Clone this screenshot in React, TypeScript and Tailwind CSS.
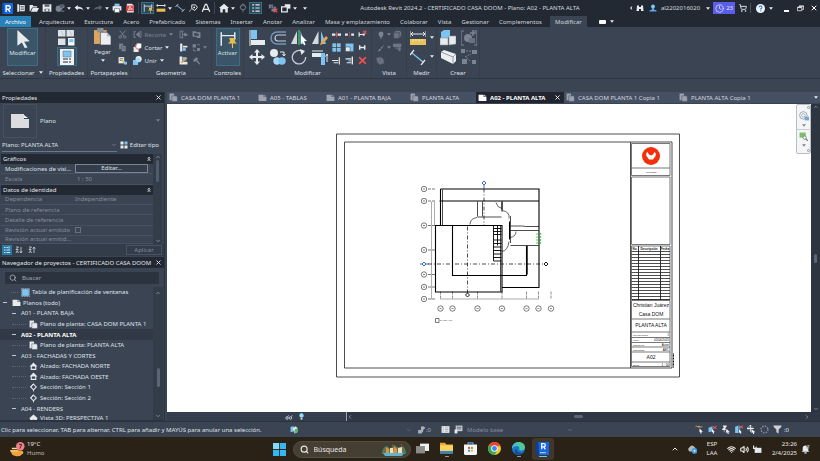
import React from 'react';
import { ChevronDown, ChevronRight, ChevronLeft, ChevronUp, X, Search, Clock, ShoppingCart, Wifi, Volume2 } from 'lucide-react';

const G = '#7c8491';
const W = '#e8ebee';
const B = '#7cc4f2';

// every glyph is drawn on a 16x16 board
const glyphs: Record<string, React.ReactNode> = {
  revit: <><path d="M0 0h16v16H0z" fill="#1667e0" /><path d="M0 0h3v16H0z" fill="#0d4bb0" /><path d="M6 13V4h3.5a2.3 2.3 0 0 1 0 5H6M9 9l2.5 4" fill="none" stroke="#fff" strokeWidth="2" /></>,
  panel: <><path d="M2 2h3v12H2zM6 3h8v10H6z" fill={W} /><path d="M7.500 5.500h5M7.500 8h5M7.500 10.500h5" stroke="#222933" /></>,
  open: <path d="M1 13V3h5l1 2h6v2H5l-3 6zM6 8h10l-3 6H3z" fill={W} />,
  save: <><path d="M1 2h14v12H1z" fill={W} /><path d="M4 2h8v4H4zM4 9h8v5H4z" fill="#59616e" /><path d="M6 10h4v3H6z" fill={W} /></>,
  sync: <><circle cx="6" cy="9" r="5" fill={G} /><path d="M8 2h7v6H8z" fill="#565f6d" /><path d="M10 10l5-4M10 13h5" stroke={G} strokeWidth="1.500" /></>,
  undo: <path d="M1 7l5-4v3c6 0 8 2 9 6-2-3-4-3-9-3v3z" fill={W} />,
  redo: <path d="M15 7l-5-4v3c-6 0-8 2-9 6 2-3 4-3 9-3v3z" fill="#59616e" />,
  print: <><path d="M4 1h8v4H4z" fill={B} /><path d="M1 5h14v7H1z" fill={W} /><path d="M4 9h8v6H4z" fill="#fff" stroke="#59616e" /></>,
  pdf: <><path d="M3 1h8l3 3v11H3z" fill={W} /><path d="M2 4h12v9H2z" fill="#e2484d" /><path d="M5 11c2-2 3-5 3-6 0 3 2 4 4 5-3-1-5 0-7 1" fill="none" stroke="#fff" /></>,
  dim: <><path d="M2 2v12M14 2v6M2 5h12" stroke={W} strokeWidth="1.300" fill="none" /><path d="M9 7h6l-1 3 2 2H8l2-2zM11.500 12h1v4h-1z" fill="#e9bd4c" /></>,
  ruler: <><path d="M1 9h14v5H1z" fill="#e9bd4c" /><path d="M1 4h14M2 2v4M14 2v4" stroke={W} strokeWidth="1.500" /></>,
  aligned: <><path d="M3 4l10 8" stroke={B} strokeWidth="1.500" /><path d="M1 6l4-4M11 14l4-4" stroke={W} strokeWidth="1.500" /></>,
  tag: <><path d="M2 14l4-5" stroke={W} /><path d="M6 3h6l3 4-4 5-5-3z" fill="none" stroke={W} strokeWidth="1.500" /><circle cx="10" cy="7" r="1.500" fill={W} /></>,
  letterA: <path d="M2 14L7 2h2l5 12M4.500 10h7" stroke={W} strokeWidth="2" fill="none" />,
  home: <path d="M8 1l8 7h-2v7h-4v-5H6v5H2V8H0z" fill={W} />,
  section: <><circle cx="8" cy="7" r="4" fill="none" stroke={G} strokeWidth="1.500" /><path d="M3 7l5-6 5 6M8 11v4" fill="none" stroke={G} strokeWidth="1.200" /></>,
  thin: <path d="M2 3h3M7 3h7M2 8h3M7 8h7M2 13h3M7 13h7" stroke={W} strokeWidth="1.800" />,
  closeWin: <><path d="M1 2h8v7H1zM5 5h8v9H5z" fill={G} stroke="#222933" /><path d="M9 9l6 6M15 9l-6 6" stroke="#ef5350" strokeWidth="2" /></>,
  switchWin: <><path d="M6 2h9v7H6z" fill={W} /><path d="M1 6h9v8H1z" fill="#222933" stroke={W} strokeWidth="2" /></>,
  bino: <path d="M2 3h4v3h4V3h4l1 11h-5v-4H6v4H1z" fill={W} />,
  user: <><circle cx="8" cy="5" r="4" fill={B} /><path d="M6 8h4v3l5 2v2H1v-2l5-2z" fill="#5ca7ea" /></>,
  help: <><circle cx="8" cy="8" r="8" fill="#f1f4f8" /><path d="M5.500 6a2.500 2.500 0 1 1 3 2.400V10M8.500 11.500v2" fill="none" stroke="#2f7dd1" strokeWidth="2" /></>,
  restore: <path d="M5 5V2h10v8h-4M1 5h10v8H1zM1 6h10M5 3h10" fill="none" stroke="#fff" strokeWidth="1.600" />,
  cursor: <path d="M3 0l11 10-5 .5 3 5-2.500.5-2.500-5L3 14z" fill={W} />,
  typeProps: <><path d="M0 1h7v6H0zM8 1h7v6H8zM0 9h7v6H0z" fill="#dfe2e6" /><path d="M3 2l2 4M11 2l2 4" stroke="#c3c8ce" /><path d="M9 8h7v8H9z" fill="#fff" stroke="#3b4453" /><path d="M10.500 9.500h4v3h-4z" fill={B} /></>,
  props: <><path d="M1 0h14v16H1z" fill="#f0f2f4" /><path d="M4 2h8v6H4z" fill={B} stroke="#5b7891" strokeWidth=".6" /><path d="M4 10h5M4 13h5M10 10h2M10 13h2" stroke="#636d7a" strokeWidth="1.500" /></>,
  paste: <><path d="M0 2h12v13H0z" fill="#d9a762" /><path d="M3 0h6v4H3z" fill="#8b8f96" /><path d="M6 4h6l4 4v8H6z" fill="#eceef0" stroke="#3b4453" strokeWidth=".6" /><path d="M12 4v4h4" fill="#b9bec5" /></>,
  cut: <><path d="M3 1l8 10M13 1L5 11" stroke={G} strokeWidth="1.500" /><circle cx="4" cy="12.500" r="2.200" fill="none" stroke={G} strokeWidth="1.500" /><circle cx="12" cy="12.500" r="2.200" fill="none" stroke={G} strokeWidth="1.500" /></>,
  copyPage: <><path d="M2 1h7v10H2z" fill={G} /><path d="M6 5h8v10H6z" fill="#8d949f" stroke="#3b4453" /><path d="M8 8h4M8 10h4M8 12h4" stroke="#3b4453" /></>,
  match: <><path d="M1 2h10v11H1z" fill={W} /><path d="M3 5h6M3 8h6" stroke="#59616e" strokeWidth="1.500" /><path d="M6 7l6 5" stroke="#e9bd4c" strokeWidth="3" /><path d="M10 10h6v5h-5z" fill={B} /></>,
  cope: <path d="M2 2v12M2 3h3M2 13h3M6 8l5-4v8zM14 2v12M12 3h2M12 13h2" fill={G} stroke={G} strokeWidth="1.500" />,
  cutGeo: <><path d="M1 7h9v9H1z" fill={W} /><path d="M7 0l8 1v8l-6 2-4-5z" fill="#fff" stroke="#3b4453" strokeWidth=".5" /><path d="M9 1a5 5 0 1 0 4 8" fill="none" stroke="#ed6a62" strokeWidth="1.500" /></>,
  joinGeo: <><circle cx="10" cy="5.500" r="5.500" fill={W} /><path d="M0 7h9v9H0z" fill={B} /><circle cx="9" cy="7" r="4" fill="#a9d8f7" /></>,
  wallJoin: <><path d="M2 2h4v12H2zM6 2h2M6 14h2" stroke={G} fill="none" strokeWidth="1.500" /><path d="M7 8l5-4v3h3v3h-3v2z" fill={G} /></>,
  paint: <path d="M1 2h6l1 2h7v10H9l-1-2H1z M4 5v5h8V7z" fill={G} fillRule="evenodd" />,
  beam: <><path d="M2 1h4v14H2z" fill={W} /><path d="M7 5h8v3H7z" fill={W} /><path d="M7 9h5v5H7z" fill={B} /></>,
  split: <><path d="M1 2h6v6H1zM9 9h5v5H9z" fill={G} /><path d="M9 3h5M3 10v4h4" stroke={G} strokeWidth="1.500" fill="none" /></>,
  faces: <><path d="M1 1h5v14H1zM6 10h9v5H6z" fill={W} /><path d="M7 2h6v6H7z" fill={B} /><path d="M4 12L14 3" stroke="#e9a13c" strokeWidth="2.500" /></>,
  hammer: <path d="M2 7l6-5 3 3-2 2 6 7-2 1-6-6-3 2z" fill={G} />,
  alignTool: <><path d="M1 0v16" stroke={W} strokeWidth="1" /><path d="M2 0h6v9H2z" fill={B} /><path d="M2 10h14v5H2z" fill={W} /></>,
  offset: <><path d="M16 2H7a6 6 0 0 0 0 12h9" fill="none" stroke="#7195b7" strokeWidth="1.500" /><path d="M16 5H8a3 3 0 0 0 0 6h8" fill="none" stroke="#c5ccd5" strokeWidth="1.200" /></>,
  mirrorAxis: <><path d="M6 1v13H0z" fill="#d5d9de" /><path d="M8 0v15" stroke="#49b06a" strokeWidth="1.500" /><path d="M9.500 1v13H14z" fill={B} /><path d="M10 5l6 6-3 .3 1.500 3.500-1.500.5-1.500-3.500L10 14z" fill="#fff" /></>,
  mirrorDraw: <><path d="M6.500 1v13H0z" fill="#d5d9de" /><path d="M9 1v13h5z" fill={B} /><path d="M8 15l1-3 5-6 2 2-5 6z" fill="#e9a552" /></>,
  move: <path d="M8 0l3 3.500H9V7h3.500V5L16 8l-3.500 3V9H9v3.500h2L8 16l-3-3.500h2V9H3.500v2L0 8l3.500-3v2H7V3.500H5z" fill={W} />,
  copy: <><circle cx="4" cy="4" r="4" fill={W} /><circle cx="7" cy="12" r="3.700" fill="#a9d8f7" /><circle cx="12" cy="12" r="3.700" fill={B} /><path d="M10 3h4v3M12.500 5l1.500 2 1.500-2" fill="none" stroke={W} /></>,
  rotate: <><path d="M11 2.200A6.700 6.700 0 1 0 14.700 8" fill="none" stroke="#c5ccd5" strokeWidth="1.300" /><path d="M9 0l5 2-3.500 4z" fill={W} /></>,
  trim: <><path d="M0 4h9v4H0z" fill={W} /><path d="M9 4h4v12H9z" fill={B} /><path d="M0 2h11M15 13V6M13.500 7.500L15 5l1.500 2.500" stroke={W} fill="none" /></>,
  splitEl: <><path d="M0 6h6v4H0zM10 6h6v4h-6z" fill={W} /><path d="M8 3v10" stroke="#ef5350" strokeWidth="1.500" /></>,
  splitGap: <><path d="M0 6h5v4H0zM11 6h5v4h-5z" fill={W} /><path d="M8 3v10" stroke="#ef5350" strokeWidth="1.200" strokeDasharray="2 1" /></>,
  unpin: <><path d="M2 4v8M2 8h6" stroke={W} strokeWidth="2" fill="none" /><path d="M8 6h4v4H8z" fill={W} /><path d="M9 1l6 6M15 1L9 7" stroke="#ef5350" strokeWidth="2" /></>,
  array: <path d="M1 1h6v6H1zM9 1h6v6H9zM1 9h6v6H1zM9 9h6v6H9z" fill={B} stroke="#a9d8f7" strokeWidth=".5" />,
  scale: <><path d="M1 1h14v14H1z" fill={B} /><path d="M1 7h8v8H1z" fill={W} stroke="#3b4453" /></>,
  pin: <path d="M3 4v8M3 8h8M12 4v8" stroke={W} strokeWidth="2.500" />,
  trimOne: <path d="M0 8h11M3 12h8M13 2v13" stroke={W} strokeWidth="2" />,
  trimMany: <><path d="M13 1v14" stroke={W} strokeWidth="2.500" /><path d="M1 5h10M3 12h8" stroke={W} strokeWidth="2" /><path d="M6 8.500h5" stroke={B} strokeWidth="2" /></>,
  del: <path d="M2 2l12 12M14 2L2 14" stroke="#f0524f" strokeWidth="3" />,
  bulb: <path d="M8 1a5 5 0 0 1 3 9v2H5v-2a5 5 0 0 1 3-9M6 13h4v2H6z" fill={G} />,
  cube: <path d="M5 1h10v9l-4 5H1V5zM1 5h10v10M11 5l4-4" fill="#6b7380" stroke="#3b4453" />,
  brush: <path d="M15 1L7 8l2 2zM6 9l2 2c-2 4-5 4-7 3 3 0 2-4 5-5" fill={G} />,
  override: <path d="M1 2h13v4H1zM4 9h10M8 12h6M12 8v7" fill="#6b7380" stroke={G} strokeWidth="1.500" />,
  shape: <path d="M1 3l8-1 5 5v6l-7 2-5-4z M5 6l4 3" fill="#6b7380" stroke="#59616e" />,
  measure: <><path d="M0 1v6M16 1v6M1 4h14M3 2L1 4l2 2M13 2l2 2-2 2" fill="none" stroke={W} strokeWidth="1" /><path d="M0 9h16v6H0z" fill="#e8c458" /><path d="M3 9v3M6 9v2M9 9v3M12 9v2" stroke="#fff" strokeWidth=".6" /></>,
  measureDiag: <><path d="M2 4l11 9" stroke={B} strokeWidth="1.300" /><path d="M0 6l4-5M11 16l4-5" stroke={W} strokeWidth="1.300" /></>,
  group: <><path d="M1 2l3-2h6v6L8 8H1z" fill={B} /><path d="M0 8h8v7H0zM9 6h7v8l-7 1z" fill={W} stroke="#8d949f" strokeWidth=".6" /></>,
  assembly: <><path d="M1 3l3-2 12 4v7l-3 3L1 9z" fill="#eceef0" /><path d="M1 3l12 5v7M13 8l3-3" fill="none" stroke="#7c8491" strokeWidth=".8" /></>,
  parts: <><path d="M3 1H0v14h3M13 1h3v14h-3" fill="none" stroke={G} strokeWidth="1.200" /><circle cx="7" cy="8" r="4" fill={G} /><path d="M8 8h6v5H8z" fill="#69717e" /><path d="M12 0v6M9 3h6" stroke={G} strokeWidth="1.500" /></>,
  similar: <><path d="M0 0h4v4H0zM11 1h5v4h-5zM1 10h5v5H1zM11 11h4v4h-4z" fill={G} /><path d="M5 2h5M4 8l6-3M9 12L5 8" stroke={G} strokeDasharray="2 1" /></>,
  page: <><path d="M1 3h9v4h5v7H1z" fill="currentColor" /><path d="M11 3l4 3h-4z" fill="currentColor" /></>,
  planView: <><path d="M1 1h8v12H1z" fill="currentColor" /><path d="M5 5h8l2 2v8H5z" fill="currentColor" stroke="#3b4453" strokeWidth=".8" /></>,
  blueTable: <><path d="M1 1h14v14H1z" fill="none" stroke={W} strokeDasharray="2 1" /><path d="M2 2h12v12H2z" fill={B} /></>,
  elevation: <path d="M8 1l7 7h-2v6H3V8H1zM5 8h6v4H5z" fill={W} fillRule="evenodd" />,
  sectionView: <><path d="M3 7l5-5 5 5-5 5z" fill="none" stroke={W} strokeWidth="1.800" /><path d="M8 12v3M3 7l5-6" stroke={W} strokeWidth="1.500" /></>,
  editType: <><path d="M1 1h6v6H1zM1 9h6v6H1zM9 9h6v6H9z" fill={W} /><path d="M9 1h6v6H9z" fill={B} /></>,
  sortCat: <path d="M2 3h3M2 8h3M2 13h3M7 3h3M7 8h7M7 13h7M12 1v4" stroke={W} strokeWidth="1.800" />,
  sortAsc: <path d="M2 2h5L2 7h5M2 14l2.500-5L7 14M12 2v11M9.500 10.500L12 14l2.500-3.500" stroke={W} strokeWidth="1.400" fill="none" />,
  sortDesc: <path d="M2 2h5L2 7h5M2 14l2.500-5L7 14M12 14V3M9.500 5.500L12 2l2.500 3.500" stroke={W} strokeWidth="1.400" fill="none" />,
  glasses: <><circle cx="4" cy="10" r="2.500" fill="none" stroke={W} strokeWidth="1.500" /><circle cx="11" cy="10" r="2.500" fill="none" stroke={W} strokeWidth="1.500" /><path d="M5 8l3-4M12 8l3-4" stroke={W} /></>,
  bulbOn: <><circle cx="8" cy="5.500" r="5" fill="#8fe0ff" /><path d="M6 11h4v4H6z" fill={W} /></>,
  worksets: <><path d="M1 3l6-1v9l-6 2z" fill={B} /><path d="M5 6l5-4 3 3v8l-5 2z" fill={W} /><path d="M8 8l6-3v7l-6 3z" fill="#59b56b" /></>,
  editable: <path d="M2 15V9h5V3l4-1 4 3-4 4v2l-3 4z" fill="#aab0b9" />,
  options: <><path d="M1 2h14v12H1z" fill={W} /><path d="M3 5h2M7 5h6M3 8h2M7 8h6M3 11h2M7 11h6" stroke="#8b929d" strokeWidth="1.200" /></>,
  optionSet: <><path d="M3 1h12v10H3z" fill="#c7ccd3" /><path d="M5 4h8M5 7h8" stroke="#59616e" strokeWidth="1.500" /><path d="M1 8h5v7H1z" fill={W} /></>,
  selLink: <><path d="M1 3c3-3 5 3 8 0M5 3c3-3 5 3 8 0" stroke="#e7a56a" strokeWidth="1.600" fill="none" /><path d="M8 6l6 6h-3l1 3h-2l-1-3-1 1z" fill="#fff" /></>,
  selUnder: <><path d="M1 5l7-3v9l-7 2z" fill={B} /><path d="M9 2l6 5M15 2L9 7" stroke="#ef5350" strokeWidth="1.800" /><path d="M7 7l5 5h-2l1 3H9l-1-3-1 1z" fill="#fff" /></>,
  selPin: <path d="M3 1h7v2L8 5v3h3L16 13h-3l1 3h-2l-1-3-2 1V9H6v4H5V9H2V7l3-2z" fill={W} />,
  selFace: <><path d="M2 3l6-2v13H2z" fill={B} /><path d="M8 1l3 2v10H8z" fill="#4a93c9" /><path d="M10 1l6 5M16 1l-6 5" stroke="#ef5350" strokeWidth="1.800" /><path d="M9 8l5 5h-2l1 2h-2l-1-2-1 1z" fill="#fff" /></>,
  selDrag: <><path d="M6 0v12M0 6h12" stroke={W} strokeWidth="1.800" /><path d="M3 3l3-3 3 3M3 9l-3-3 3-3" stroke={W} fill="none" /><path d="M8 7l7 6h-3l1 3h-2l-1-3-2 1z" fill="#fff" /></>,
  spinner: <circle cx="8" cy="8" r="6" fill="none" stroke="#8d949f" strokeWidth="2.500" strokeDasharray="2.500 2.200" />,
  filter: <path d="M1 1h14v2l-5 5v7l-4-2V8L1 3z" fill="#cdd2d8" />,
  start: <><path d="M0 0h7.500v7.500H0zM8.500 0H16v7.500H8.500zM0 8.500h7.500V16H0zM8.500 8.500H16V16H8.500z" fill="#37b7f1" /><path d="M0 0h7.500v7.500H0z" fill="#7fdcfb" /></>,
  taskView: <><path d="M5 2h11v9H5z" fill="#f1f1f1" /><path d="M0 5h11v9H0z" fill="#8c8b88" /></>,
  explorer: <><path d="M0 1h6l2 2h8v11H0z" fill="#e8a92e" /><path d="M0 4h16v8H0z" fill="#fbd35c" /><path d="M0 11h16v3H0z" fill="#2f86d8" /></>,
  store: <><path d="M5 3V1h6v2" fill="none" stroke="#58a6e0" strokeWidth="1.500" /><path d="M0 3h16v11q0 2-2 2H2q-2 0-2-2z" fill="#f4f6f8" /><path d="M5 6h2.500v2.500H5z" fill="#e8513a" /><path d="M8.500 6H11v2.500H8.500z" fill="#71b340" /><path d="M5 9.500h2.500V12H5z" fill="#2f9ae0" /><path d="M8.500 9.500H11V12H8.500z" fill="#f2b52e" /></>,
  chrome: <><circle cx="8" cy="8" r="8" fill="#f7c52f" /><path d="M8 8L1.100 4A8 8 0 0 1 14.900 4z" fill="#e5443a" /><path d="M8 8L1.100 4A8 8 0 0 0 8 16l3.500-6z" fill="#34a853" /><circle cx="8" cy="8" r="4" fill="#fff" /><circle cx="8" cy="8" r="3" fill="#3f82f0" /></>,
  edge: <><circle cx="8" cy="8" r="8" fill="#1c78cc" /><path d="M0 8C0 3 4 0 8 0c5 0 8 3 8 6.500 0 3-2.500 4-4.500 4S8.500 9.500 9 8 8 5 6 5 1 6 0 8" fill="#4fc99a" /><path d="M0 8C0 4 4 1 9 3.500 5 3.500 2 5 0 8" fill="#45b8ea" /><path d="M6 8c-1 4 3 6.500 8 4.500-2 3-6 4-9 2S3 9 6 8" fill="#0f4f99" /></>,
  revitApp: <><path d="M0 0h16v16H0z" fill="#1667e0" /><path d="M0 0h3l1 16H0z" fill="#0b3f98" /><path d="M7 9V2h2.500a2 2 0 0 1 0 4H7M9.500 6l2 3" fill="none" stroke="#fff" strokeWidth="1.500" /><path d="M5 13h7" stroke="#cfe0fb" strokeWidth="1.500" strokeDasharray="2 .6" /></>,
  cloud: <><path d="M4 12a4 4 0 0 1 0-7 5 5 0 0 1 9 1 3.500 3.500 0 0 1 0 6z" fill="#b9b7b3" /><circle cx="12" cy="11" r="4.500" fill="#3b9be6" /><path d="M10 11h4M12 9v4" stroke="#fff" /></>,
  battery: <><path d="M3 5h12v9H3z" fill={W} /><path d="M1 1v5h4l1-3" stroke={W} strokeWidth="2" fill="none" /></>,
  bell: <><path d="M1 12l2-2V6a5 5 0 0 1 10 0v4l2 2zM6 13h4v2H6z" fill={W} /><path d="M10 0h6v6h-6z" fill="#2a2318" opacity=".6" /><path d="M11 1h4l-4 4h4" stroke={W} fill="none" /></>,
  wheel: <><circle cx="7" cy="7" r="6" fill="#f4f5f7" stroke="#8a93a0" strokeWidth="1.200" /><circle cx="7" cy="7" r="2.800" fill="none" stroke="#8a93a0" /><path d="M9 9h7v6H9z" fill="#77a6d6" /></>,
  zoomNav: <><path d="M1 1h11v9H1z" fill="#7dbd6c" /><circle cx="10" cy="10" r="3" fill="#f1f5f1" stroke="#6d7a70" strokeWidth="1.300" /><path d="M12 12l4 4" stroke="#6d7a70" strokeWidth="2" /></>,
};

const Icon = ({ name, size = 'size-[10px]' }: { name: string; size?: string }) => (
  <svg viewBox="0 0 16 16" className={`${size} shrink-0`} aria-hidden="true">{glyphs[name]}</svg>
);

const Caret = ({ dim = false }: { dim?: boolean }) => (
  <svg viewBox="0 0 6 4" className="w-[4px] h-[3px] shrink-0" aria-hidden="true">
    <path d="M0 0h6L3 4z" fill={dim ? '#7c8491' : '#e8ebee'} />
  </svg>
);

const Tool = ({ name, size, box = 'w-[13px] h-[13px]' }: { name: string; size?: string; box?: string }) => (
  <button aria-label={name} className={`${box} flex items-center justify-center shrink-0`}>
    <Icon name={name} size={size} />
  </button>
);

// v: drop-down arrow, |: divider, -: plain gap, *: switched on
const quick = ['panel', 'open', 'save', 'sync', 'v', 'undo', 'v', 'redo', 'v', 'print', 'pdf', '|', '*dim', 'ruler', 'v', 'aligned', 'tag', 'letterA', '|', 'home', 'v', 'section', '*thin', '-', 'closeWin', 'switchWin', 'v', '-', 'v'];

const TitleBar = () => (
  <header className="h-4 shrink-0 flex items-center justify-between bg-[#222933] text-[#d5d9df]">
    <div className="flex items-center h-3 mr-1">
      <div className="w-[14px] flex justify-center"><Icon name="revit" size="size-[11px]" /></div>
      {quick.map((q, i) => {
        if (q === 'v') return <button key={i} aria-label="Más" className="w-[6px] flex justify-center"><Caret /></button>;
        if (q === '|') return <span key={i} className="w-px h-3 mx-[2px] bg-[#3e4755]" />;
        if (q === '-') return <span key={i} className="w-[4px]" />;
        if (q[0] === '*') return <Tool key={i} name={q.slice(1)} box="w-[13px] h-3 bg-[#28485a] border border-[#3a7088]" />;
        return <Tool key={i} name={q} box="w-[13px] h-3" />;
      })}
    </div>
    <h1 className="font-normal whitespace-nowrap">Autodesk Revit 2024.2 - CERTIFICADO CASA DOOM - Plano: A02 - PLANTA ALTA</h1>
    <div className="flex items-center h-3">
      <ChevronLeft className="size-[6px] fill-white" />
      <Tool name="bino" size="size-[8px]" />
      <Tool name="user" size="size-[8px]" />
      <button className="flex items-center gap-[6px] pl-px pr-[3px]">al2202016020 <Caret /></button>
      <button className="flex items-center gap-[2px] h-3 px-[2px] bg-[#5a5ee8] text-[#e4e5ff]"><Clock className="size-[9px]" />23</button>
      <button aria-label="Tienda" className="w-[15px] flex justify-center"><ShoppingCart className="size-[8px]" strokeWidth={3} /></button>
      <span className="w-px h-[10px] mr-[3px] bg-[#4a5361]" />
      <Tool name="help" size="size-[9px]" />
      <button aria-label="Más ayuda" className="w-[7px] flex justify-center"><Caret /></button>
      <button aria-label="Minimizar" className="w-4 ml-1 flex justify-center pt-[5px]"><span className="w-[5px] h-[2px] bg-white" /></button>
      <Tool name="restore" size="size-[7px]" />
      <button aria-label="Cerrar" className="w-[13px] flex justify-center"><X className="size-[8px] text-white" strokeWidth={3} /></button>
    </div>
  </header>
);

const menu = ['Arquitectura', 'Estructura', 'Acero', 'Prefabricado', 'Sistemas', 'Insertar', 'Anotar', 'Analizar', 'Masa y emplazamiento', 'Colaborar', 'Vista', 'Gestionar', 'Complementos'];

const MenuBar = () => (
  <nav className="h-[11px] shrink-0 flex items-stretch bg-[#222933] text-[#cfd4db]">
    <button className="w-[31px] mr-[3px] bg-[#2a81b8] text-white">Archivo</button>
    {menu.map((m) => (
      <button key={m} className="px-[5px]">{m}</button>
    ))}
    <button className="w-[37px] ml-[3px] bg-[#3b4453]">Modificar</button>
    <button aria-label="Cinta" className="flex items-center gap-[4px] ml-[12px]"><span className="w-[7px] h-[4px] rounded-[1px] bg-white" /><Caret /></button>
  </nav>
);

const Group = ({ label, width, children }: { label: React.ReactNode; width: string; children: React.ReactNode }) => (
  <section className={`${width} shrink-0 flex flex-col items-center border-r border-[#353e4b]`}>
    <div className="h-10 pt-px w-full flex justify-center">{children}</div>
    <div className="h-[11px] flex items-center gap-1 whitespace-nowrap">{label}</div>
  </section>
);

const Row = ({ children }: { children: React.ReactNode }) => <div className="h-[13px] flex items-center">{children}</div>;

const Ribbon = () => (
  <div className="h-[65px] shrink-0 bg-[#3b4453] text-[#dfe2e7]">
    <div className="h-[52px] flex border-b border-[#2e3643]">
      <Group width="w-[46px]" label={<>Seleccionar <Caret /></>}>
        <button className="w-[31px] h-[38px] flex flex-col items-center pt-[1px] bg-[#3c5468] border border-[#3d6c85]">
          <Icon name="cursor" size="size-[18px]" />Modificar
        </button>
      </Group>
      <Group width="w-[42px]" label="Propiedades">
        <div className="flex flex-col items-center">
          <Tool name="typeProps" size="size-[17px]" box="w-[20px] h-[19px]" />
          <Tool name="props" size="size-[16px]" box="w-[20px] h-[19px] bg-[#3c5468] border border-[#3d6c85]" />
        </div>
      </Group>
      <Group width="w-[43px]" label="Portapapeles">
        <button className="w-[26px] flex flex-col items-center gap-[2px]"><Icon name="paste" size="size-[17px]" />Pegar<Caret /></button>
        <div><Tool name="cut" size="size-[9px]" /><Tool name="copyPage" size="size-[9px]" /><Tool name="match" size="size-[9px]" /></div>
      </Group>
      <Group width="w-[81px]" label="Geometría">
        <div className="w-[44px]">
          <Row><button className="flex items-center gap-[3px] text-[#7c8491]"><Icon name="cope" size="size-[9px]" />Recorte <Caret dim /></button></Row>
          <Row><button className="flex items-center gap-[3px]"><Icon name="cutGeo" size="size-[9px]" />Cortar <Caret /></button></Row>
          <Row><button className="flex items-center gap-[3px]"><Icon name="joinGeo" size="size-[9px]" />Unir <Caret /></button></Row>
        </div>
        <div className="w-[33px]">
          <Row><Tool name="wallJoin" size="size-[9px]" /><Tool name="paint" size="size-[9px]" /></Row>
          <Row><Tool name="beam" size="size-[9px]" /><Tool name="split" size="size-[9px]" /><Caret dim /></Row>
          <Row><Tool name="faces" size="size-[9px]" /><Tool name="hammer" size="size-[9px]" /></Row>
        </div>
      </Group>
      <Group width="w-[32px]" label="Controles">
        <button className="w-[24px] h-[38px] flex flex-col items-center pt-[1px] bg-[#3c5468] border border-[#3d6c85]">
          <Icon name="dim" size="size-[18px]" />Activar
        </button>
      </Group>
      <Group width="w-[128px]" label="Modificar">
        <div className="grid grid-cols-4 w-[84px]">
          {['alignTool', 'offset', 'mirrorAxis', 'mirrorDraw', 'move', 'copy', 'rotate', 'trim'].map((n) => (
            <Tool key={n} name={n} size="size-[16px]" box="w-[21px] h-[19px]" />
          ))}
        </div>
        <div className="grid grid-cols-3 w-[39px] content-start">
          {['splitEl', 'splitGap', 'unpin', 'array', 'scale', 'pin', 'trimOne', 'trimMany', 'del'].map((n) => (
            <Tool key={n} name={n} size="size-[9px]" />
          ))}
        </div>
      </Group>
      <Group width="w-[35px]" label="Vista">
        <div>
          <Row><Tool name="bulb" size="size-[8px]" /><Caret dim /><Tool name="cube" size="size-[9px]" /></Row>
          <Row><Tool name="brush" size="size-[8px]" /><Caret dim /><Tool name="override" size="size-[9px]" /></Row>
          <Row><Tool name="shape" size="size-[9px]" /></Row>
        </div>
      </Group>
      <Group width="w-[30px]" label="Medir">
        <div>
          <div className="h-[19px] flex items-center gap-[3px]"><Tool name="measure" size="size-[16px]" box="w-[18px] h-[19px]" /><Caret /></div>
          <div className="h-[19px] flex items-center gap-[3px]"><Tool name="measureDiag" size="size-[16px]" box="w-[18px] h-[19px]" /><Caret /></div>
        </div>
      </Group>
      <Group width="w-[43px]" label="Crear">
        <div className="grid grid-cols-2 w-[42px]">
          {['group', 'parts', 'assembly', 'similar'].map((n) => (
            <Tool key={n} name={n} size="size-[16px]" box="w-[21px] h-[19px]" />
          ))}
        </div>
      </Group>
    </div>
  </div>
);

const PanelHeader = ({ title }: { title: string }) => (
  <div className="h-[11px] shrink-0 flex items-center justify-between pl-[2px] pr-[2px] bg-[#222933] text-[#e2e5ea]">
    <h2 className="font-normal whitespace-nowrap">{title}</h2>
    <button aria-label="Cerrar"><X className="size-[7px]" strokeWidth={3} /></button>
  </div>
);

const PropSection = ({ title }: { title: string }) => (
  <div className="flex-1 flex items-center justify-between pl-[2px] pr-[2px] bg-[#222933] text-[#e2e5ea]">
    {title}
    <svg viewBox="0 0 6 8" className="w-[4px] h-[6px]"><path d="M1 4l2-3 2 3M1 7l2-3 2 3" fill="none" stroke="#fff" /></svg>
  </div>
);

const PropRow = ({ label, grow = 'flex-1', on = false, children }: { label: string; grow?: string; on?: boolean; children?: React.ReactNode }) => (
  <div className={`${grow} flex items-center pl-[4px] border-b border-[#465061] overflow-hidden ${on ? 'text-[#dfe2e7]' : 'text-[#858d99]'}`}>
    <span className="w-[70px] shrink-0 whitespace-nowrap">{label}</span>
    {children}
  </div>
);

const Properties = () => (
  <section className="h-[164px] shrink-0 flex flex-col">
    <PanelHeader title="Propiedades" />
    <div className="h-[35px] flex items-center pl-[3px] pr-[4px]">
      <div className="w-[34px] h-[34px] flex items-center justify-center border border-[#465061]">
        <svg viewBox="0 0 18 14" className="w-[18px] h-[14px]"><path d="M0 0h13v5h5v9H0z" fill="#dcdddf" /><path d="M13 1l4 3h-4z" fill="#f4f4f4" /></svg>
      </div>
      <select aria-label="Tipo" className="flex-1 appearance-none bg-transparent pl-[3px] text-[#dfe2e7]"><option>Plano</option></select>
      <Caret dim />
    </div>
    <div className="h-[14px] flex items-center pl-[2px] pr-[5px] text-[#dfe2e7]">
      <div className="flex-1 flex items-center h-[13px] border-b border-[#69778c] mr-[3px]">
        <select aria-label="Elemento" className="flex-1 appearance-none bg-transparent"><option>Plano: PLANTA ALTA</option></select>
        <ChevronDown className="size-[6px] text-[#a5acb7]" />
      </div>
      <button className="flex items-center gap-[2px]"><Icon name="editType" size="size-[8px]" />Editar tipo</button>
    </div>
    <div className="flex-1 min-h-0 flex mt-[2px]">
      <div className="flex-1 flex flex-col pl-px">
        <PropSection title="Gráficos" />
        <PropRow label="Modificaciones de visi..." on>
          <button className="w-[73px] h-[9px] leading-[7px] border border-[#7a8698] bg-[#343d4a]">Editar...</button>
        </PropRow>
        <PropRow label="Escala"><span className="pl-[2px]">1 : 50</span></PropRow>
        <PropSection title="Datos de identidad" />
        <PropRow label="Dependencia">Independiente</PropRow>
        <PropRow label="Plano de referencia" />
        <PropRow label="Detalle de referencia" />
        <PropRow label="Revisión actual emitida"><input type="checkbox" aria-label="Revisión actual emitida" className="appearance-none size-[6px] border border-[#667081]" /></PropRow>
        <PropRow label="Revisión actual emitid..." grow="h-[8px] shrink-0" />
      </div>
      <div className="w-[9px] mr-[2px] flex flex-col items-center justify-between bg-[#333c49] text-[#c3c8d0]">
        <ChevronUp className="size-[6px]" />
        <div className="w-[3px] flex-1 mb-[56px] rounded bg-[#505b6b]" />
        <ChevronDown className="size-[6px]" />
      </div>
    </div>
    <div className="h-[12px] flex items-center gap-px px-[2px] bg-[#333c49]">
      <Tool name="sortCat" size="size-[8px]" box="w-[10px] h-[10px] bg-[#2a7ca8]" />
      <Tool name="sortAsc" size="size-[8px]" box="w-3 h-[10px]" />
      <Tool name="sortDesc" size="size-[8px]" box="w-3 h-[10px]" />
      <button className="ml-auto w-[36px] h-[10px] leading-[8px] border border-[#485262] text-[#858d99]">Aplicar</button>
    </div>
  </section>
);

interface Node { text: string; icon?: string; level: number; active?: boolean }
const tree: Node[] = [
  { text: 'Tabla de planificación de ventanas', icon: 'blueTable', level: 1 },
  { text: 'Planos (todo)', icon: 'page', level: 0 },
  { text: 'A01 - PLANTA BAJA', level: 1 },
  { text: 'Plano de planta: CASA DOM PLANTA 1', icon: 'planView', level: 2 },
  { text: 'A02 - PLANTA ALTA', level: 1, active: true },
  { text: 'Plano de planta: PLANTA ALTA', icon: 'planView', level: 2 },
  { text: 'A03 - FACHADAS Y CORTES', level: 1 },
  { text: 'Alzado: FACHADA NORTE', icon: 'elevation', level: 2 },
  { text: 'Alzado: FACHADA OESTE', icon: 'elevation', level: 2 },
  { text: 'Sección: Sección 1', icon: 'sectionView', level: 2 },
  { text: 'Sección: Sección 2', icon: 'sectionView', level: 2 },
  { text: 'A04 - RENDERS', level: 1 },
];
const indents = ['pl-[2px]', 'pl-[11px]', 'pl-[12px]'];

const TreeRow = ({ node }: { node: Node }) => (
  <li className={`flex-1 min-h-0 flex items-center whitespace-nowrap ${indents[node.level]} ${node.active ? 'bg-[#303945] text-white font-bold' : ''}`}>
    {node.level === 2 || (node.icon && node.level === 1)
      ? <span className={`${node.level === 2 ? 'w-[14px]' : 'w-[7px]'} mr-[3px] border-t border-dotted border-[#5b6575]`} />
      : <span className="w-[4px] h-px ml-px mr-[5px] bg-[#c3c8d0]" />}
    {node.icon && <span className="mr-[2px] flex text-[#e8ebee]"><Icon name={node.icon} size="size-[9px]" /></span>}
    {node.text}
  </li>
);

const Browser = () => (
  <section className="flex-1 min-h-0 flex flex-col mt-px">
    <PanelHeader title="Navegador de proyectos - CERTIFICADO CASA DOOM" />
    <label className="h-3 shrink-0 mx-[5px] mt-[4px] flex items-center gap-[5px] px-1 bg-[#2b333f] text-[#c3c8d0]">
      <Search className="size-[8px]" />
      <input type="text" aria-label="Buscar" placeholder="Buscar" className="flex-1 bg-transparent outline-none placeholder-[#a3aab5]" />
    </label>
    <div className="flex-1 min-h-0 flex mt-[3px] text-[#dfe2e7] border-b border-[#2b333f]">
      <ul className="flex-1 flex flex-col overflow-hidden">
        {tree.map((n) => <TreeRow key={n.text} node={n} />)}
        <li className="h-[6px] shrink-0 overflow-hidden flex items-start whitespace-nowrap pl-[12px]">
          <span className="w-[14px] mr-[3px] mt-1" />
          <span className="mr-[2px]"><Icon name="home" size="size-[9px]" /></span>
          <span className="leading-[9px]">Vista 3D: PERSPECTIVA 1</span>
        </li>
      </ul>
      <div className="w-[10px] mr-px flex flex-col items-center justify-between bg-[#333c49] text-[#c3c8d0]">
        <ChevronUp className="size-[6px] mt-[3px]" />
        <div className="w-[3px] h-[19px] mt-[45px] rounded bg-[#5a6575]" />
        <ChevronDown className="size-[6px] mb-[1px]" />
      </div>
    </div>
  </section>
);

const docTabs = [
  { text: 'CASA DOM PLANTA 1', icon: 'planView', width: 'w-[89px]' },
  { text: 'A05 - TABLAS', icon: 'page', width: 'w-[68px]' },
  { text: 'A01 - PLANTA BAJA', icon: 'page', width: 'w-[84px]' },
  { text: 'PLANTA ALTA', icon: 'planView', width: 'w-[68px]' },
  { text: 'A02 - PLANTA ALTA', icon: 'page', width: 'w-[88px]', active: true },
  { text: 'CASA DOM PLANTA 1 Copia 1', icon: 'planView', width: 'w-[113px]' },
  { text: 'PLANTA ALTA Copia 1', icon: 'planView', width: 'w-[90px]' },
];

const DocTabs = () => (
  <div role="tablist" className="h-3 shrink-0 flex items-stretch bg-[#465063] border-b border-[#3a4352]">
    {docTabs.map((t) => (
      <button key={t.text} role="tab" aria-selected={!!t.active} className={`${t.width} flex items-center gap-[3px] pl-[2px] whitespace-nowrap ${t.active ? 'bg-[#20252f] text-white font-bold' : 'text-[#d2d6dd]'}`}>
        <span className={t.active ? 'text-white' : 'text-[#9ba3af]'}><Icon name={t.icon} size="size-[9px]" /></span>
        {t.text}
        {t.active && <X className="size-[7px] ml-auto mr-[3px]" strokeWidth={3} />}
      </button>
    ))}
    <button aria-label="Lista de vistas" className="ml-auto w-[9px] flex items-center justify-center"><Caret /></button>
  </div>
);

const gridRows = [189.5, 201.5, 226, 250.5, 275, 287.5, 299.5];
const gridCols = [440.5, 452.5, 477.500, 502, 526.5, 538.5, 551];
const revisionRows = Array.from({ length: 17 }, (_, i) => 252 + i * 3);

// sheet A02: frame, title block and upper floor plan
const Sheet = () => (
  <svg viewBox="167 105 644 307" className="w-full h-full" fill="none" stroke="#222">
    <path d="M336.500 134.500h343v243h-343z" strokeWidth=".8" />
    <path d="M344.500 142.500h327.500v226H344.500z" strokeWidth=".8" />
    <g stroke="#555" strokeWidth=".8">
      <path d="M630.500 142.500v226" stroke="#222" />
      <path d="M631.500 144h38.500v32h-38.500zM631.500 168.500h38.500M631.500 177.500h38.500v67.500h-38.500zM631.500 246.500h38.500v53.500h-38.500zM631.500 301h38.500v66h-38.500z" />
      <path d="M631.500 319.500h38.500M631.500 332.500h38.500M631.500 338h38.500M631.500 343h38.500M631.500 347.500h38.500M631.500 352.500h38.500M631.500 362.500h38.500" />
      <path d="M638.500 246.500v53.500M660.500 246.500v53.500" stroke="#000" />
      {revisionRows.map((y) => <path key={y} d={`M631.500 ${y}h38.500`} stroke="#222" strokeWidth=".8" />)}
    </g>
    <circle cx="651" cy="156.500" r="9" fill="#f3300c" stroke="none" />
    <path d="M647.500 152.500l1.500 2.500 2 1 2-1 1.500-2.500q2 1 1 4l-2.500 3.500h-4l-2.500-3.500q-1-3 1-4z" fill="#fff" stroke="none" />
    <g fill="#111" stroke="none" fontFamily="Liberation Sans, sans-serif" textAnchor="middle" fontSize="5">
      <text x="651" y="307">Christian Juárez</text>
      <text x="651" y="316.500">Casa DOM</text>
      <text x="651" y="327.500">PLANTA ALTA</text>
      <text x="651" y="359">A02</text>
      <g fontSize="2">
        <text x="651" y="173">Universidad</text>
        <g fontSize="3" fontWeight="bold"><text x="635" y="250">No.</text><text x="649" y="250">Descripción</text><text x="665" y="250">Fecha</text></g>
      </g>
      <g fontSize="2" textAnchor="start">
        <text x="633" y="336">Proyecto número</text><text x="633" y="341">Fecha</text><text x="633" y="346">Dibujado por</text><text x="633" y="351">Comprobado</text><text x="633" y="366">Escala</text>
      </g>
      <g fontSize="3" textAnchor="end">
        <text x="669" y="336">1</text><text x="669" y="341">02/04/2025</text><text x="669" y="346">Autor</text><text x="669" y="351">ABC</text><text x="669" y="366">1 : 50</text>
      </g>
    </g>
    <path d="M673.500 354v14" stroke="#000" strokeDasharray="1 .5" />

    <g strokeWidth=".6">
      {gridRows.map((y) => (
        <g key={y}><circle cx="424" cy={y} r="2.700" /><path d={`M423 ${y}h2M428 ${y}h7`} strokeDasharray="3 1" /></g>
      ))}
      {gridCols.map((x) => (
        <g key={x}><circle cx={x} cy="309" r="2.700" /><path d={`M${x - 1} 309h2M${x} 292v8`} strokeDasharray="3 1" stroke="#444" /></g>
      ))}
      <path d="M431.500 202v98M434.500 202v24M440 299.500h99" stroke="#777" />
    </g>
    <g stroke="#000" strokeWidth="1">
      <path d="M440.500 189.500h98.500v98.500h-37M440.500 189.500v36.500M435.500 226h66.500v66.500h-66.500zM526.500 246.500v29.500h-74v-50M439.500 201.500h99.500" strokeWidth="1.100" />
      <path d="M442.500 190v36M477.500 202v15M482.500 202v15M477.500 217.500h24M502 202v8M510.500 216.500v27M510.500 226.500h12l3 .5h13.500M510.500 231h28M510.500 246h28M527.500 246v29M500.500 226v66" strokeWidth=".7" />
      <path d="M502 202v10M509.500 222v18" strokeWidth="1" />
      <path d="M493.500 226v35.500h8M493.500 229h8M493.500 232h8M493.500 235h8M493.500 240.500h8M493.500 244h8M493.500 247.500h8M493.500 251h8M493.500 254.500h8M493.500 258h8M497.500 226v20" strokeWidth=".9" />
      <path d="M477 218q-7 1-7 7M496 203q1 5 6 6M502 211q8 1 7 8M510 238q6-1 6-6M509 242q-1 9-7 10" strokeWidth=".6" />
      <path d="M467.500 227v67M484 189v37M428 264.500h116" strokeWidth=".7" strokeDasharray="4 2 1 2" />
    </g>
    <g strokeWidth=".9" fill="#fff">
      <path d="M484 181.500l2 2-2 2-2-2zM484 185.500v3M424 262.500l2 2-2 2-2-2zM420 264.500h2M426 264.500h3" stroke="#2358c8" />
      <path d="M546 262.500l2 2-2 2-2-2zM467.500 293.500l2 2-2 2-2-2z" stroke="#000" />
    </g>
    <path d="M537 233.500v11M540.500 233.500v11" stroke="#44e04c" strokeWidth="1" strokeDasharray="2 1" />
    <path d="M435.500 319h3.500v4h-3.500z" strokeWidth=".6" />
    <text x="440" y="321.500" fill="#111" stroke="none" fontSize="2" fontFamily="Liberation Sans, sans-serif">PLANTA ALTA</text>
  </svg>
);

const Workspace = () => (
  <main className="flex-1 min-w-0 flex flex-col ml-[2px]">
    <DocTabs />
    <div className="flex-1 min-h-0 flex">
      <div className="relative flex-1 min-w-0 bg-white">
        <Sheet />
        <div className="absolute top-0 right-0 w-[15px] h-[50px] flex flex-col items-center justify-around rounded-[2px] border border-[#b9bdc4] bg-[#f4f5f6]">
          <span className="size-[3px] rounded-full border border-[#8a93a0] ml-auto" />
          <Icon name="wheel" size="size-[10px]" />
          <Caret dim />
          <span className="w-full h-px bg-[#c9ccd1]" />
          <Icon name="zoomNav" size="size-[9px]" />
          <Caret dim />
          <span className="size-[3px] rounded-full border border-[#8a93a0] ml-auto" />
        </div>
      </div>
      <div className="w-[9px] flex flex-col items-center justify-between bg-[#2d3541] text-[#c3c8d0]">
        <ChevronUp className="size-[6px]" />
        <div className="w-[3px] h-[9px] rounded bg-[#5a6575]" />
        <ChevronDown className="size-[6px]" />
      </div>
    </div>
    <div className="h-[9px] shrink-0 flex items-center bg-[#2e3743] text-[#c3c8d0]">
      <div className="w-[180px] h-full flex items-center justify-end gap-1 pr-[40px] border-r border-[#9aa2ad] bg-[#343e4c]">
        <Tool name="glasses" size="size-[8px]" box="w-[9px] h-[9px]" />
        <Tool name="bulbOn" size="size-[7px]" box="w-[9px] h-[9px]" />
      </div>
      <ChevronLeft className="size-[6px]" />
      <div className="flex-1 flex justify-center"><span className="w-[9px] h-[3px] rounded bg-[#5a6575]" /></div>
      <ChevronRight className="size-[6px] mr-[10px]" />
    </div>
  </main>
);

const StatusBar = () => (
  <footer className="h-4 shrink-0 flex items-center pl-px bg-[#3b4453] border-t border-[#2b333f] text-[#dfe2e7] whitespace-nowrap">
    <span className="w-[289px]">Clic para seleccionar, TAB para alternar, CTRL para añadir y MAYÚS para anular una selección.</span>
    <Icon name="worksets" size="size-[9px]" />
    <ChevronDown className="size-[6px] ml-[107px] mr-[5px] text-[#7c8491]" />
    <span className="w-[22px] flex items-center text-[#a5acb7]"><Icon name="editable" size="size-[9px]" />:0</span>
    <Tool name="options" size="size-[9px]" />
    <Tool name="optionSet" size="size-[9px]" />
    <label className="ml-[2px] flex items-center text-[#858d99]">
      <select aria-label="Opción de diseño" className="w-[100px] appearance-none bg-transparent"><option>Modelo base</option></select>
      <ChevronDown className="size-[6px]" />
    </label>
    <div className="ml-auto mr-[31px] flex items-center">
      {['selLink', 'selUnder', 'selPin', 'selFace', 'selDrag', 'spinner', 'filter'].map((n) => (
        <Tool key={n} name={n} size="size-[9px]" />
      ))}
      :0
    </div>
  </footer>
);

const TaskBar = () => (
  <div className="h-6 shrink-0 grid grid-cols-[1fr_auto_1fr] items-center bg-[#2a2217] text-[#e9e6e1] leading-[9px]">
    <button className="flex items-center gap-[2px] pl-[10px] text-left">
      <svg viewBox="0 0 16 16" className="size-[15px]">
        <path d="M1 9h11q3 1 2 3-3 4-8 3-5-1-5-6" fill="#f0a33a" /><path d="M2 7h8M0 9.500h9" stroke="#ffd98a" strokeWidth="1.500" />
        <circle cx="11" cy="4.500" r="4.500" fill="#f0808a" /><path d="M9.500 2.500h3l-2 4.500" fill="none" stroke="#3a2020" />
      </svg>
      <span>19°C<br /><span className="text-[#c4bfb6]">Humo</span></span>
    </button>
    <div className="flex items-center pl-2">
      <Tool name="start" size="size-[13px]" box="w-[13px] h-5" />
      <label className="w-[118px] h-[17px] ml-[7px] mr-px flex items-center gap-[5px] pl-[6px] pr-[3px] rounded-full bg-[#453e33] border border-[#544d42]">
        <Search className="size-[9px] shrink-0" strokeWidth={3} />
        <input type="text" aria-label="Búsqueda" placeholder="Búsqueda" className="flex-1 min-w-0 bg-transparent text-[7px] outline-none placeholder-[#e9e6e1]" />
        <svg viewBox="0 0 26 14" className="w-[26px] h-[14px]">
          <path d="M1 12q0-7 5-8l3 3 4-4 5 3 4-2q3 3 3 8z" fill="#4b7f5c" /><path d="M2 11h21l-2 3H4z" fill="#5fb4cf" />
          <path d="M5 5l3 2v4H5zM13 4l3 3v4h-4z" fill="#e8903a" /><path d="M9 6h3v5H9zM17 6l4-1v6h-4z" fill="#efe0bd" /><path d="M3 7h1M11 3h1M20 3h1M22 8h1" stroke="#cf3e3a" strokeWidth="1.500" />
        </svg>
      </label>
      {['taskView', 'explorer', 'store', 'chrome', 'edge', 'revitApp'].map((n, i) => (
        <button key={n} aria-label={n} className={`w-[22px] mr-[2px] h-[22px] flex flex-col items-center justify-center gap-px rounded-[3px] ${n === 'revitApp' ? 'bg-[#40382c]' : ''}`}>
          <Icon name={n} size="size-[13px]" />
          <span className={`h-px rounded ${n === 'revitApp' ? 'w-[8px] bg-[#62cdf7]' : i === 1 || i === 4 ? 'w-[4px] bg-[#a39e96]' : 'w-[4px]'}`} />
        </button>
      ))}
    </div>
    <div className="flex items-center justify-end pr-[10px]">
      <ChevronUp className="size-[8px]" strokeWidth={3} />
      <span className="w-[8px]" />
      <Icon name="cloud" size="size-[10px]" />
      <button className="w-[30px] text-center">ESP<br />LAA</button>
      <button aria-label="Sistema" className="flex items-center gap-[4px]">
        <Wifi className="size-[9px]" strokeWidth={3} /><Volume2 className="size-[9px]" strokeWidth={3} /><Icon name="battery" size="size-[9px]" />
      </button>
      <button className="w-[35px] text-right mr-[4px]">23:26<br />2/4/2025</button>
      <Icon name="bell" size="size-[9px]" />
    </div>
  </div>
);

const App: React.FC = () => (
  <div className="h-screen flex flex-col overflow-hidden bg-[#3b4453] font-['Noto_Sans',sans-serif] text-[6px] leading-[10px]">
    <TitleBar />
    <MenuBar />
    <Ribbon />
    <div className="flex-1 min-h-0 flex">
      <aside className="w-[165px] shrink-0 flex flex-col border-r border-[#2b333f]">
        <Properties />
        <Browser />
      </aside>
      <Workspace />
    </div>
    <StatusBar />
    <TaskBar />
  </div>
);

export default App;
